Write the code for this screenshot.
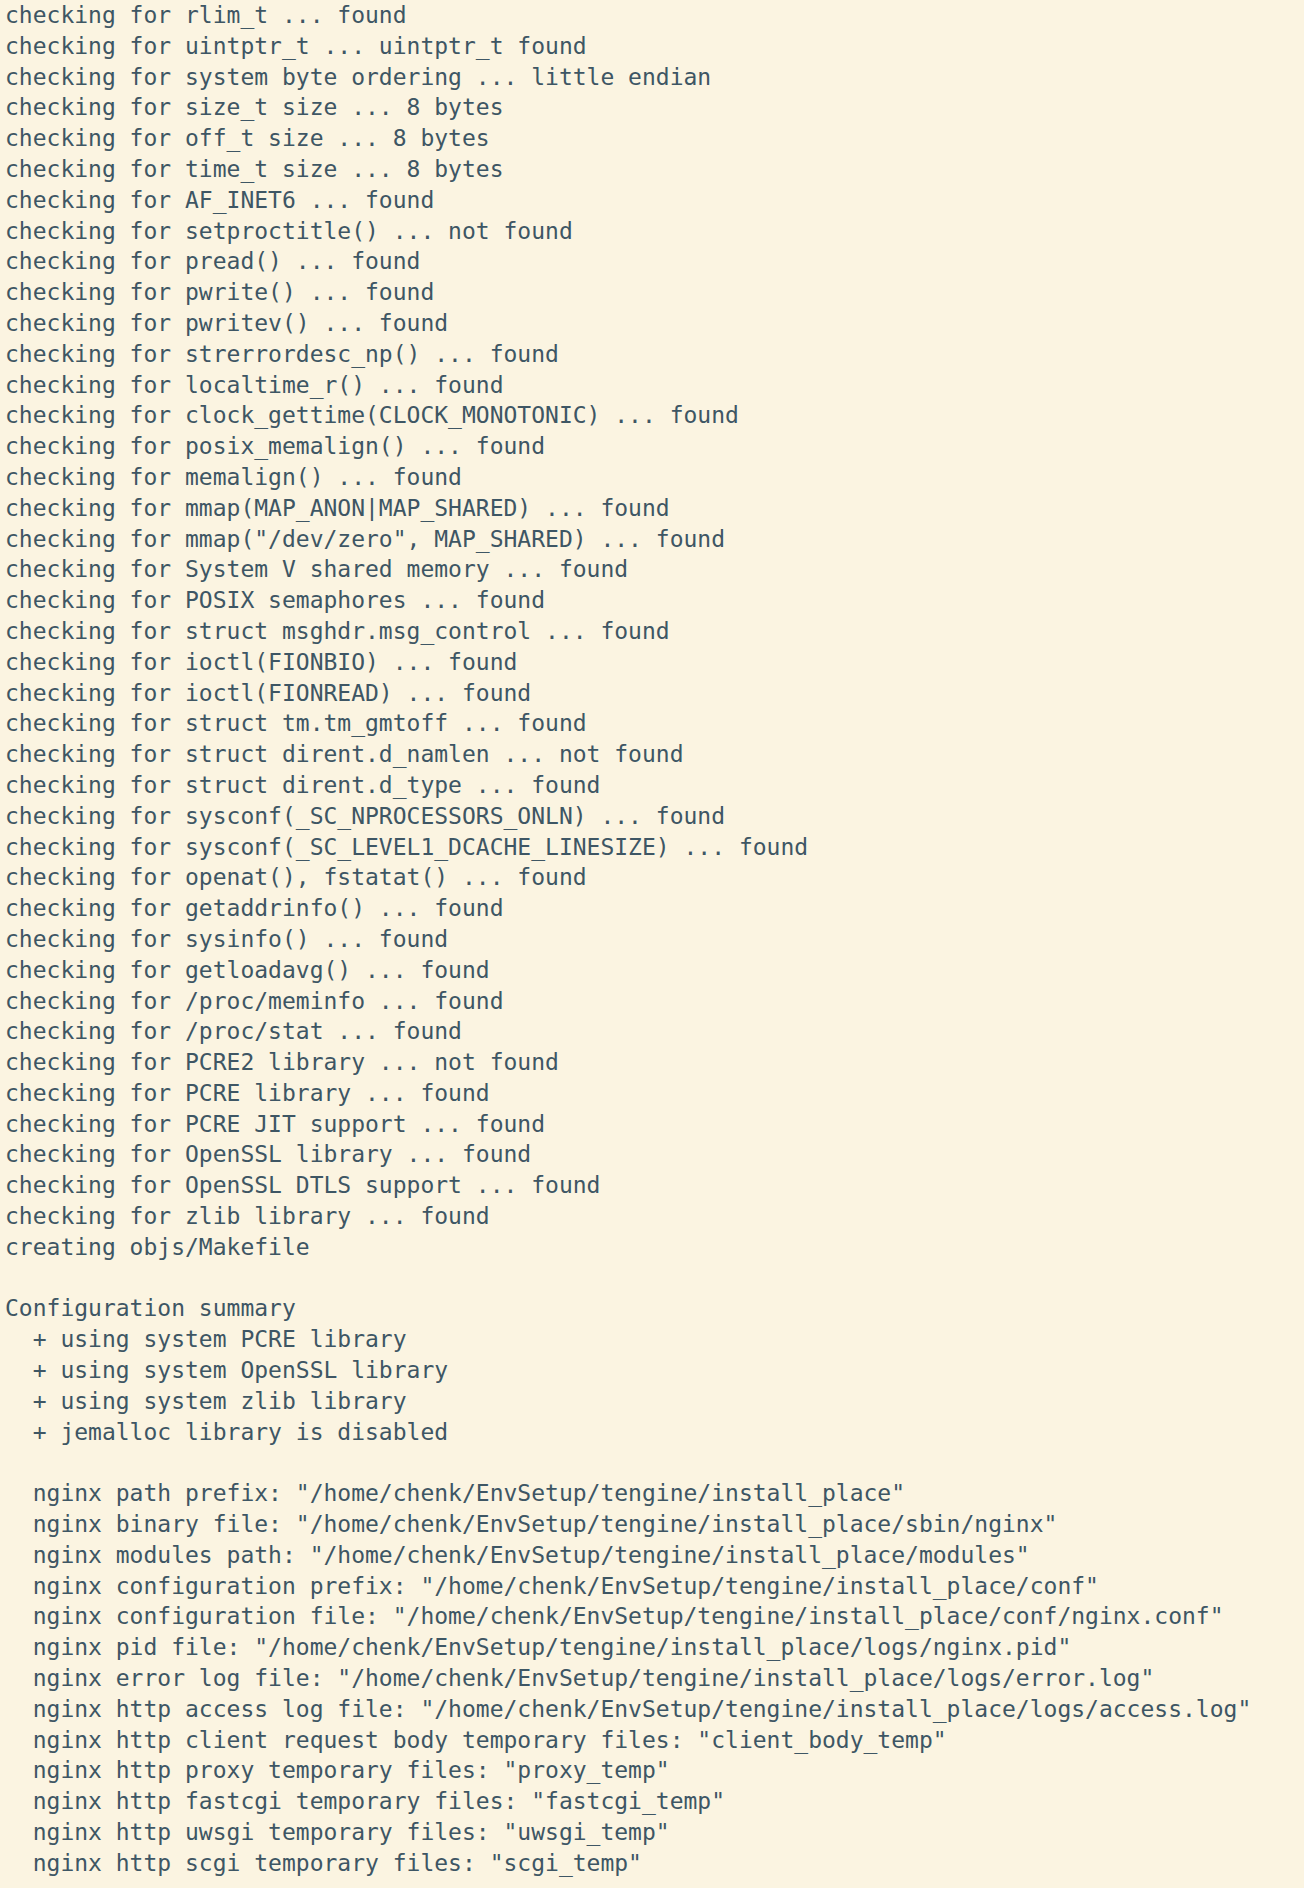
const lines = [
  "checking for rlim_t ... found",
  "checking for uintptr_t ... uintptr_t found",
  "checking for system byte ordering ... little endian",
  "checking for size_t size ... 8 bytes",
  "checking for off_t size ... 8 bytes",
  "checking for time_t size ... 8 bytes",
  "checking for AF_INET6 ... found",
  "checking for setproctitle() ... not found",
  "checking for pread() ... found",
  "checking for pwrite() ... found",
  "checking for pwritev() ... found",
  "checking for strerrordesc_np() ... found",
  "checking for localtime_r() ... found",
  "checking for clock_gettime(CLOCK_MONOTONIC) ... found",
  "checking for posix_memalign() ... found",
  "checking for memalign() ... found",
  "checking for mmap(MAP_ANON|MAP_SHARED) ... found",
  'checking for mmap("/dev/zero", MAP_SHARED) ... found',
  "checking for System V shared memory ... found",
  "checking for POSIX semaphores ... found",
  "checking for struct msghdr.msg_control ... found",
  "checking for ioctl(FIONBIO) ... found",
  "checking for ioctl(FIONREAD) ... found",
  "checking for struct tm.tm_gmtoff ... found",
  "checking for struct dirent.d_namlen ... not found",
  "checking for struct dirent.d_type ... found",
  "checking for sysconf(_SC_NPROCESSORS_ONLN) ... found",
  "checking for sysconf(_SC_LEVEL1_DCACHE_LINESIZE) ... found",
  "checking for openat(), fstatat() ... found",
  "checking for getaddrinfo() ... found",
  "checking for sysinfo() ... found",
  "checking for getloadavg() ... found",
  "checking for /proc/meminfo ... found",
  "checking for /proc/stat ... found",
  "checking for PCRE2 library ... not found",
  "checking for PCRE library ... found",
  "checking for PCRE JIT support ... found",
  "checking for OpenSSL library ... found",
  "checking for OpenSSL DTLS support ... found",
  "checking for zlib library ... found",
  "creating objs/Makefile",
  "",
  "Configuration summary",
  "  + using system PCRE library",
  "  + using system OpenSSL library",
  "  + using system zlib library",
  "  + jemalloc library is disabled",
  "",
  '  nginx path prefix: "/home/chenk/EnvSetup/tengine/install_place"',
  '  nginx binary file: "/home/chenk/EnvSetup/tengine/install_place/sbin/nginx"',
  '  nginx modules path: "/home/chenk/EnvSetup/tengine/install_place/modules"',
  '  nginx configuration prefix: "/home/chenk/EnvSetup/tengine/install_place/conf"',
  '  nginx configuration file: "/home/chenk/EnvSetup/tengine/install_place/conf/nginx.conf"',
  '  nginx pid file: "/home/chenk/EnvSetup/tengine/install_place/logs/nginx.pid"',
  '  nginx error log file: "/home/chenk/EnvSetup/tengine/install_place/logs/error.log"',
  '  nginx http access log file: "/home/chenk/EnvSetup/tengine/install_place/logs/access.log"',
  '  nginx http client request body temporary files: "client_body_temp"',
  '  nginx http proxy temporary files: "proxy_temp"',
  '  nginx http fastcgi temporary files: "fastcgi_temp"',
  '  nginx http uwsgi temporary files: "uwsgi_temp"',
  '  nginx http scgi temporary files: "scgi_temp"',
];

export default function App() {
  return (
    <div className="min-h-screen w-full bg-[#fbf4e1] pl-[5px] text-[#3e5664] font-['DejaVu_Sans_Mono',monospace] text-[23px] leading-[30.8px]">
      <pre className="font-['DejaVu_Sans_Mono',monospace] whitespace-pre">
        {lines.map((line, i) => (
          <div key={i} className="h-[30.8px]">{line}</div>
        ))}
      </pre>
    </div>
  );
}
